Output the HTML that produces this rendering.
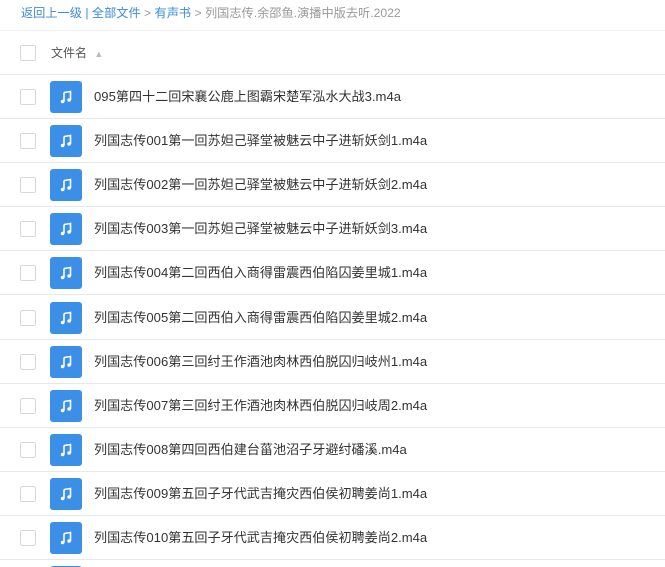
<!DOCTYPE html><html><head><meta charset="utf-8"><style>
html,body{margin:0;width:665px;height:567px;overflow:hidden;background:#fff;font-family:"Liberation Sans","Noto Sans CJK SC",sans-serif;}
body{position:relative}
.bc{position:absolute;left:21px;top:4px;font-size:12.2px;color:#999;line-height:18px;white-space:nowrap}
.bc a{color:#3b8cd9;text-decoration:none}
.sep{position:absolute;left:0;right:0;top:30px;border-top:1px solid #f0f0f4}
.row{position:absolute;left:0;width:665px;height:43px;border-bottom:1px solid #e8e8ec}
.cb{position:absolute;left:20px;top:14px;width:14px;height:14px;border:1px solid #d8d8dc;border-radius:2px;background:#fff}
.ic{position:absolute;left:50px;top:6px;width:32px;height:32px;border-radius:3px;background:#3c8fe6}
.ic svg{position:absolute;left:8px;top:8px}
.t{position:absolute;left:94px;top:13px;font-size:13.1px;color:#333;line-height:18px;white-space:nowrap}
</style></head><body>
<div class="bc"><a>返回上一级</a> <span style="color:#3b8cd9">|</span> <a>全部文件</a> &gt; <a>有声书</a> &gt; 列国志传.余邵鱼.演播中版去听.2022</div>
<div class="sep"></div>
<div class="row" style="top:31px"><div class="cb"></div><div class="t" style="left:51px;color:#555;font-size:12px">文件名 <span style="color:#bbb;font-size:9px;margin-left:4px">▲</span></div></div>
<div id="rows"></div>
<script>
var n=["095第四十二回宋襄公鹿上图霸宋楚军泓水大战3.m4a","列国志传001第一回苏妲己驿堂被魅云中子进斩妖剑1.m4a","列国志传002第一回苏妲己驿堂被魅云中子进斩妖剑2.m4a","列国志传003第一回苏妲己驿堂被魅云中子进斩妖剑3.m4a","列国志传004第二回西伯入商得雷震西伯陷囚姜里城1.m4a","列国志传005第二回西伯入商得雷震西伯陷囚姜里城2.m4a","列国志传006第三回纣王作酒池肉林西伯脱囚归岐州1.m4a","列国志传007第三回纣王作酒池肉林西伯脱囚归岐周2.m4a","列国志传008第四回西伯建台菑池沼子牙避纣磻溪.m4a","列国志传009第五回子牙代武吉掩灾西伯侯初聘姜尚1.m4a","列国志传010第五回子牙代武吉掩灾西伯侯初聘姜尚2.m4a",""];
var h="";for(var i=0;i<n.length;i++){h+='<div class="row" style="top:'+Math.round(75+44.1*i)+'px"><div class="cb"></div><div class="ic"><svg width="16" height="16" viewBox="0 0 16 16"><path d="M6 3.5L12.5 2.5V11" stroke="#fff" stroke-width="1.6" fill="none"/><path d="M6 3.5V12.5" stroke="#fff" stroke-width="1.6"/><circle cx="4.6" cy="12.5" r="1.8" fill="#fff"/><circle cx="11.1" cy="11" r="1.8" fill="#fff"/></svg></div><div class="t">'+n[i]+'</div></div>';}
document.getElementById("rows").innerHTML=h;
</script>
</body></html>
